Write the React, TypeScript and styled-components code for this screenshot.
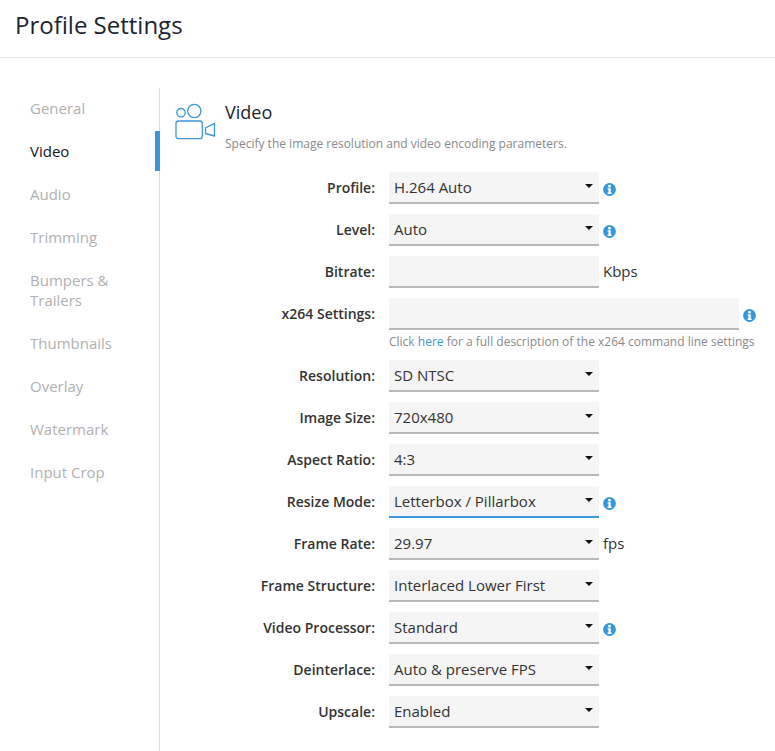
import React from "react";
import styled, { createGlobalStyle } from "styled-components";

const Global = createGlobalStyle`
  html, body { margin: 0; padding: 0; background: #fff; }
  body { font-family: "Open Sans", "Liberation Sans", sans-serif; color: #333; overflow: hidden; }
  * { box-sizing: border-box; }
`;

const Page = styled.div`
  width: 775px;
  height: 751px;
  overflow: hidden;
`;

const Header = styled.header`
  height: 58px;
  padding: 8px 15px 0;
  border-bottom: 1px solid #e5e5e5;
`;

const Title = styled.h1`
  margin: 0;
  font-size: 24px;
  line-height: 33px;
  font-weight: 400;
  color: #1c2430;
`;

const Body = styled.div`
  display: flex;
  margin-top: 30px;
`;

const Nav = styled.nav`
  width: 160px;
  height: 663px;
  flex: none;
  padding-top: 10px;
  border-right: 1px solid #dcdcdc;
  display: flex;
  flex-direction: column;
  gap: 23px;
`;

const NavItem = styled.a<{ $active?: boolean }>`
  position: relative;
  display: block;
  padding-left: 30px;
  padding-right: 30px;
  font-size: 15px;
  line-height: 20px;
  color: ${(p) => (p.$active ? "#14171c" : "#b1b1b1")};
  ${(p) =>
    p.$active &&
    `&::after {
      content: "";
      position: absolute;
      right: -1px;
      top: -10px;
      width: 5px;
      height: 40px;
      background: #3b97d9;
    }`}
`;

const Content = styled.main`
  flex: 1;
  min-width: 0;
`;

const SectionHead = styled.div`
  display: flex;
  align-items: flex-start;
  height: 84px;
  padding: 15px 0 0 15px;
`;

const HeadText = styled.div`
  margin-left: 9px;
`;

const SectionTitle = styled.h2`
  margin: -1px 0 0;
  font-size: 18px;
  line-height: 20px;
  font-weight: 400;
  color: #1c2430;
`;

const SectionDesc = styled.p`
  margin: 13px 0 0;
  font-size: 12px;
  line-height: 17px;
  color: #8a8a8a;
`;

const Form = styled.div`
  display: flex;
  flex-direction: column;
  gap: 10px;
`;

const Row = styled.div`
  display: grid;
  grid-template-columns: 215px auto 1fr;
  column-gap: 14px;
  align-items: start;
`;

const Label = styled.label`
  text-align: right;
  font-size: 14px;
  line-height: 32px;
  font-weight: 600;
  color: #333;
`;

const FieldWrap = styled.div`
  display: flex;
  align-items: flex-start;
  grid-column: 2 / 4;
`;

const Field = styled.div<{ $wide?: boolean; $focused?: boolean }>`
  position: relative;
  width: ${(p) => (p.$wide ? "350px" : "210px")};
  height: 32px;
  padding-left: 5px;
  background: #f5f5f5;
  border-bottom: 2px solid ${(p) => (p.$focused ? "#3b97d9" : "#b8b8b8")};
  font-size: 15px;
  line-height: 30px;
  color: #333;
`;

const Caret = styled.span`
  position: absolute;
  right: 6px;
  top: 12px;
  width: 0;
  height: 0;
  border-left: 4px solid transparent;
  border-right: 4px solid transparent;
  border-top: 4px solid #111;
`;

const Unit = styled.span`
  margin-left: 4px;
  font-size: 15px;
  line-height: 30px;
  color: #333;
`;

const InfoIcon = styled.svg`
  display: block;
  flex: none;
  margin: 11px 0 0 4px;
  width: 13px;
  height: 13px;
`;

const Hint = styled.p`
  margin: 3px 0 0;
  font-size: 12px;
  line-height: 17px;
  color: #8a8a8a;
  white-space: nowrap;
  a { color: #3b97d9; }
`;

const Stack = styled.div`
  display: flex;
  flex-direction: column;
  width: 350px;
`;

const Info = () => (
  <InfoIcon viewBox="0 0 13 13" aria-hidden="true">
    <circle cx="6.5" cy="6.5" r="6.4" fill="#3498db" />
    <circle cx="6.5" cy="3.2" r="1.4" fill="#fff" />
    <path d="M4.6 5.3h3.2v4.4h.9v1.3H4.5V9.7h.9V6.6h-.8z" fill="#fff" />
  </InfoIcon>
);

const CameraSvg = styled.svg`
  display: block;
  flex: none;
  width: 41px;
  height: 37px;
`;

const CameraIcon = () => (
  <CameraSvg viewBox="0 0 41 37" fill="none" stroke="#3b97d9" strokeWidth="1.3" aria-hidden="true">
    <circle cx="6" cy="9.7" r="4.2" />
    <circle cx="19.3" cy="8" r="6.6" />
    <rect x="1" y="18" width="26.3" height="17.7" rx="2.5" />
    <path d="M39.5 20.3 L30.5 25 V30.5 L39.5 33 Z" strokeLinejoin="round" />
  </CameraSvg>
);

type RowDef = { label: string; value?: string; info?: boolean; unit?: string; select?: boolean; focused?: boolean };

const rowsTop: RowDef[] = [
  { label: "Profile:", value: "H.264 Auto", info: true, select: true },
  { label: "Level:", value: "Auto", info: true, select: true },
  { label: "Bitrate:", unit: "Kbps" },
];

const rowsBottom: RowDef[] = [
  { label: "Resolution:", value: "SD NTSC", select: true },
  { label: "Image Size:", value: "720x480", select: true },
  { label: "Aspect Ratio:", value: "4:3", select: true },
  { label: "Resize Mode:", value: "Letterbox / Pillarbox", select: true, info: true, focused: true },
  { label: "Frame Rate:", value: "29.97", select: true, unit: "fps" },
  { label: "Frame Structure:", value: "Interlaced Lower First", select: true },
  { label: "Video Processor:", value: "Standard", select: true, info: true },
  { label: "Deinterlace:", value: "Auto & preserve FPS", select: true },
  { label: "Upscale:", value: "Enabled", select: true },
];

const SimpleRow = ({ r }: { r: RowDef }) => (
  <Row>
    <Label>{r.label}</Label>
    <FieldWrap>
      <Field $focused={r.focused}>
        {r.value}
        {r.select && <Caret />}
      </Field>
      {r.unit && <Unit>{r.unit}</Unit>}
      {r.info && <Info />}
    </FieldWrap>
  </Row>
);

const nav = ["General", "Video", "Audio", "Trimming", "Bumpers & Trailers", "Thumbnails", "Overlay", "Watermark", "Input Crop"];

export default function App() {
  return (
    <Page>
      <Global />
      <Header>
        <Title>Profile Settings</Title>
      </Header>
      <Body>
        <Nav>
          {nav.map((n) => (
            <NavItem key={n} $active={n === "Video"}>
              {n}
            </NavItem>
          ))}
        </Nav>
        <Content>
          <SectionHead>
            <CameraIcon />
            <HeadText>
              <SectionTitle>Video</SectionTitle>
              <SectionDesc>Specify the image resolution and video encoding parameters.</SectionDesc>
            </HeadText>
          </SectionHead>
          <Form>
            {rowsTop.map((r) => (
              <SimpleRow key={r.label} r={r} />
            ))}
            <Row>
              <Label>x264 Settings:</Label>
              <FieldWrap>
                <Stack>
                  <Field $wide />
                  <Hint>
                    Click <a>here</a> for a full description of the x264 command line settings
                  </Hint>
                </Stack>
                <Info />
              </FieldWrap>
            </Row>
            {rowsBottom.map((r) => (
              <SimpleRow key={r.label} r={r} />
            ))}
          </Form>
        </Content>
      </Body>
    </Page>
  );
}
